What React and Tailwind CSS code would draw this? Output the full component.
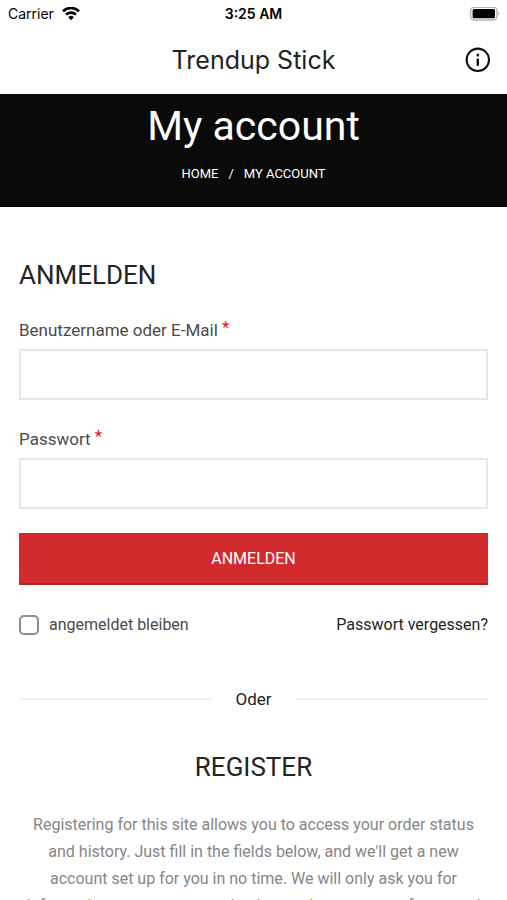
import React, { useState } from "react";

const StatusBar = () => (
  <div className="grid grid-cols-3 items-center h-7 px-2 text-sm font-['Inter',sans-serif] text-black">
    <div className="flex items-center gap-2">
      <span>Carrier</span>
      <svg className="w-[18px] h-[14px]" viewBox="0 0 18 14" fill="none" stroke="#000" strokeWidth="2.6">
        <path d="M1 4.2a11.4 11.4 0 0 1 16 0" />
        <path d="M4 7.7a7.1 7.1 0 0 1 10 0" />
        <path d="M9 13.2 6.2 10.2a4 4 0 0 1 5.6 0z" fill="#000" stroke="none" />
      </svg>
    </div>
    <span className="text-center font-semibold">3:25 AM</span>
    <svg className="justify-self-end w-[30px] h-[14px]" viewBox="0 0 30 14">
      <rect x="1.6" y="0.2" width="26.4" height="12.8" rx="3.8" fill="#fff" stroke="#b3b3b3" strokeWidth="1.4" />
      <rect x="3.6" y="2" width="22.4" height="9.2" rx="1.5" fill="#000" />
      <path d="M28.8 4.4c1.6.8 1.6 3.4 0 4.2z" fill="#b3b3b3" />
    </svg>
  </div>
);

const Header = () => (
  <header className="grid grid-cols-[1fr_auto_1fr] items-center h-[66px] px-4 pb-0.5 bg-white">
    <span />
    <h1 className="text-[25px] leading-8 font-['Inter',sans-serif] text-[#222]">Trendup Stick</h1>
    <button type="button" aria-label="Info" className="justify-self-end">
      <svg className="w-[26px] h-[26px]" viewBox="0 0 26 26" fill="none">
        <circle cx="12.8" cy="12.8" r="11.2" stroke="#111" strokeWidth="2.1" />
        <path d="M12.8 11.6v7.2" stroke="#111" strokeWidth="2.4" />
        <path d="M12.8 6.8v2.6" stroke="#111" strokeWidth="2.4" />
      </svg>
    </button>
  </header>
);

const Field = ({ id, label, type, value, onChange }) => (
  <div className="mb-6">
    <label htmlFor={id} className="block h-[34px] leading-6 text-[#4a4a4a]">
      {label} <span className="align-[3px] text-[#e01020]">*</span>
    </label>
    <input
      id={id}
      type={type}
      value={value}
      onChange={onChange}
      className="block w-full h-[51px] px-4 border-2 border-[#e6e6e6] bg-white focus:outline-none"
    />
  </div>
);

const App = () => {
  const [usuario, setUsuario] = useState("");
  const [password, setPassword] = useState("");

  return (
    <div className="flex flex-col h-screen bg-white text-[17px] font-['Roboto',sans-serif]">
      <StatusBar />
      <Header />

      <main className="flex-1 overflow-y-auto [scrollbar-width:none]">
        <section className="h-[113px] pt-2 bg-[#0a0a0a] text-center text-white">
          <h2 className="text-[41px] leading-[48px]">My account</h2>
          <nav className="flex justify-center gap-2.5 mt-3 text-[13px] leading-6 uppercase">
            <a href="#home">Home</a>
            <span>/</span>
            <span>My account</span>
          </nav>
        </section>

        <div className="px-[19px] pt-12">
          <h2 className="mb-5 text-[26px] leading-10 uppercase text-[#242424]">Anmelden</h2>

          <form onSubmit={(e) => e.preventDefault()}>
            <Field
              id="usuario"
              label="Benutzername oder E-Mail"
              type="text"
              value={usuario}
              onChange={(e) => setUsuario(e.target.value)}
            />
            <Field
              id="password"
              label="Passwort"
              type="password"
              value={password}
              onChange={(e) => setPassword(e.target.value)}
            />

            <button
              type="submit"
              className="block w-full h-[52px] pt-0.5 border-b-2 border-[#b62527] bg-[#d12b2d] text-base uppercase text-white">
              Anmelden
            </button>

            <div className="flex items-center justify-between mt-6 text-base leading-8">
              <label className="flex items-center gap-2.5 text-[#4a4a4a]">
                <input
                  type="checkbox"
                  className="appearance-none w-5 h-5 border-2 border-[#8c8c8c] rounded-[5px] bg-white checked:bg-[#d12b2d]"
                />
                angemeldet bleiben
              </label>
              <a href="#passwort" className="text-[#242424]">
                Passwort vergessen?
              </a>
            </div>
          </form>

          <div className="flex items-center gap-6 mt-[42px] leading-8 text-[#242424]">
            <span className="flex-1 h-0.5 bg-[#f0f0f0]" />
            <span>Oder</span>
            <span className="flex-1 h-0.5 bg-[#f0f0f0]" />
          </div>

          <section className="mt-8 text-center">
            <h2 className="mb-6 text-[26px] leading-10 uppercase text-[#242424]">Register</h2>
            <p className="text-base leading-[27px] text-[#868686]">
              Registering for this site allows you to access your order status and history. Just
              fill in the fields below, and we'll get a new account set up for you in no time. We
              will only ask you for information necessary to make the purchase process faster and
              easier.
            </p>
          </section>
        </div>
      </main>
    </div>
  );
};

export default App;
